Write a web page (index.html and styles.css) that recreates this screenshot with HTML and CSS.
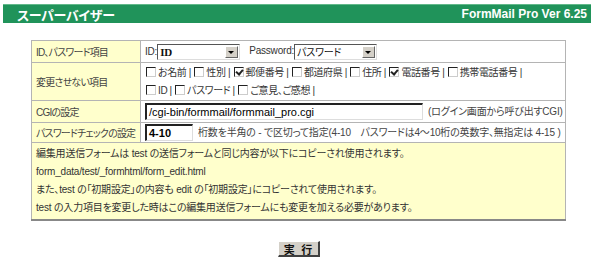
FILE: index.html
```html
<!DOCTYPE html>
<html lang="ja">
<head>
  <meta charset="UTF-8">
  <title>スーパーバイザー - FormMail Pro</title>
  <link rel="stylesheet" href="styles.css">
</head>
<body>
  <div class="header">
    <span class="title">スーパーバイザー</span>
    <span class="version">FormMail Pro Ver 6.25</span>
  </div>

  <form class="panel">
    <table class="settings">
      <colgroup>
        <col class="col-label">
        <col>
      </colgroup>
      <tr class="row-id">
        <th>ID、パスワード項目</th>
        <td>
          ID:<span class="select"><span class="select-text latin">ID</span><span class="select-btn"></span></span><span class="gap">Password:</span><span class="select"><span class="select-text">パスワード</span><span class="select-btn"></span></span>
        </td>
      </tr>
      <tr class="row-lock">
        <th>変更させない項目</th>
        <td>
          <div class="checks">
            <span class="cb"></span>お名前 | <span class="cb"></span>性別 | <span class="cb on"></span>郵便番号 | <span class="cb"></span>都道府県 | <span class="cb"></span>住所 | <span class="cb on"></span>電話番号 | <span class="cb"></span>携帯電話番号 |
          </div>
          <div class="checks">
            <span class="cb"></span>ID | <span class="cb"></span>パスワード | <span class="cb"></span>ご意見、ご感想 |
          </div>
        </td>
      </tr>
      <tr class="row-cgi">
        <th>CGIの設定</th>
        <td><span class="field wide">/cgi-bin/formmail/formmail_pro.cgi</span><span class="hint">(ログイン画面から呼び出すCGI)</span></td>
      </tr>
      <tr class="row-pass">
        <th>パスワードチェックの設定</th>
        <td><span class="field short">4-10</span><span class="hint">桁数を半角の - で区切って指定(4-10　パスワードは4～10桁の英数字、無指定は 4-15 )</span></td>
      </tr>
      <tr class="row-note">
        <td colspan="2" class="note">
          <p>編集用送信フォームは test の送信フォームと同じ内容が以下にコピーされ使用されます。</p>
          <p>form_data/test/_formhtml/form_edit.html</p>
          <p>また、test の「初期設定」の内容も edit の「初期設定」にコピーされて使用されます。</p>
          <p>test の入力項目を変更した時はこの編集用送信フォームにも変更を加える必要があります。</p>
        </td>
      </tr>
    </table>

    <div class="actions">
      <button type="button" class="run">実 行</button>
    </div>
  </form>
</body>
</html>
```

FILE: styles.css
```css
body {
  margin: 0;
  padding: 4px 9px 0 3px;
  font-family: "Liberation Sans", "Noto Sans CJK JP", sans-serif;
  font-size: 10px;
  font-feature-settings: "palt";
  color: #333;
}
.header {
  display: flex;
  justify-content: space-between;
  align-items: center;
  height: 18px;
  padding: 0 4px 0 14px;
  background: #20935a;
  border-top: 1px solid #62b98a;
  color: #fff;
  font-weight: bold;
  font-size: 12px;
}
.header .title {
  font-size: 13px;
  letter-spacing: -0.3px;
}
.settings {
  margin: 17px 0 0 28px;
  width: 535px;
  table-layout: fixed;
  border-collapse: collapse;
  border: 1px solid #999;
}
.col-label {
  width: 109px;
}
.settings th,
.settings td {
  border: 1px solid #b4b4b4;
  padding: 0 4px;
  vertical-align: middle;
  white-space: nowrap;
}
.settings th {
  background: #ffffcc;
  font-weight: normal;
  text-align: left;
  letter-spacing: -0.8px;
  color: #444;
}
.settings td {
  letter-spacing: -0.2px;
}
.row-id { height: 22px; }
.row-lock { height: 38px; }
.row-cgi { height: 22px; }
.row-pass { height: 20px; }
.checks {
  line-height: 18px;
  letter-spacing: -0.4px;
}
.cb {
  display: inline-block;
  position: relative;
  width: 8px;
  height: 8px;
  margin: 0 2px 0 1px;
  border-top: 1px solid #222;
  border-left: 1px solid #222;
  border-right: 1px solid #ccc;
  border-bottom: 1px solid #ccc;
  background: #fff;
  vertical-align: -1px;
}
.cb.on::after {
  content: "";
  position: absolute;
  left: 2px;
  top: 0;
  width: 3px;
  height: 5px;
  border-right: 2px solid #222;
  border-bottom: 2px solid #222;
  transform: rotate(40deg);
}
.select {
  display: inline-flex;
  align-items: center;
  justify-content: space-between;
  width: 78px;
  height: 12px;
  padding: 1px 1px 1px 2px;
  border-top: 1px solid #555;
  border-left: 1px solid #555;
  border-right: 1px solid #ddd;
  border-bottom: 1px solid #ddd;
  background: #fff;
  vertical-align: middle;
  color: #111;
}
.select-text.latin {
  font-family: "Liberation Serif", serif;
  font-weight: bold;
  font-size: 11px;
}
.select-btn {
  position: relative;
  width: 13px;
  height: 12px;
  background: #d4d0c8;
  border-top: 1px solid #fff;
  border-left: 1px solid #fff;
  border-right: 1px solid #666;
  border-bottom: 1px solid #666;
  box-sizing: border-box;
}
.select-btn::after {
  content: "";
  position: absolute;
  left: 2px;
  top: 4px;
  border-left: 3px solid transparent;
  border-right: 3px solid transparent;
  border-top: 3px solid #000;
}
.gap {
  margin-left: 9px;
}
.field {
  display: inline-block;
  height: 14px;
  line-height: 14px;
  padding: 0 2px;
  border-top: 2px solid #222;
  border-left: 2px solid #222;
  border-right: 1px solid #ddd;
  border-bottom: 1px solid #ddd;
  background: #fff;
  color: #000;
  vertical-align: middle;
  font-size: 11px;
  letter-spacing: 0;
}
.field.wide {
  width: 271px;
}
.field.short {
  width: 41px;
  font-weight: bold;
}
.hint {
  margin-left: 5px;
  color: #444;
}
.note {
  background: #ffffcc;
  padding: 2px 4px 2px 4px !important;
  border-bottom: 2px solid #888 !important;
}
.note p {
  margin: 0;
  line-height: 18px;
}
.actions {
  margin: 20px 0 0 28px;
  width: 535px;
  text-align: center;
}
.run {
  width: 42px;
  height: 16px;
  padding: 0;
  background: #d4d0c8;
  border-top: 1px solid #fff;
  border-left: 1px solid #fff;
  border-right: 2px solid #404040;
  border-bottom: 2px solid #404040;
  font-family: "Noto Sans CJK JP", sans-serif;
  font-size: 11px;
  font-weight: bold;
  word-spacing: 4px;
  color: #111;
  line-height: 12px;
}
```
